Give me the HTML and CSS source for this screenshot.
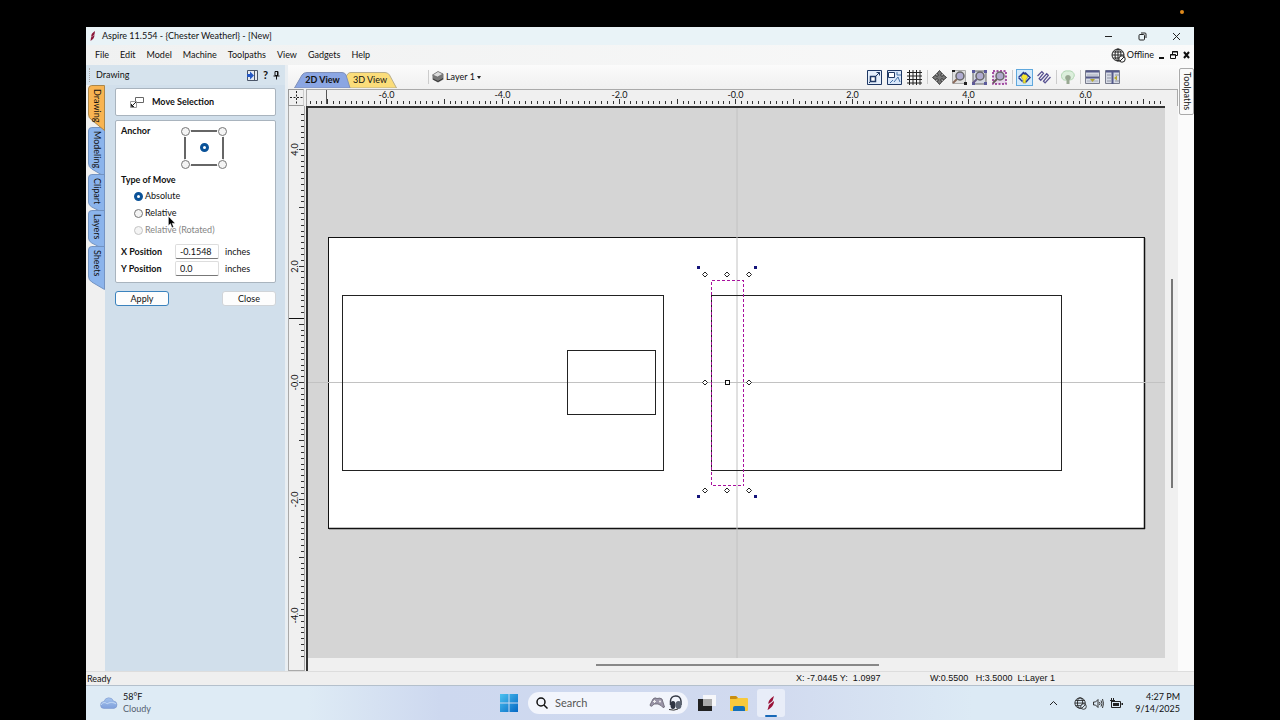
FILE: index.html
```html
<!DOCTYPE html>
<html lang="en">
<head>
<meta charset="utf-8">
<title>Aspire 11.554 - {Chester Weatherl} - [New]</title>
<link rel="stylesheet" href="styles.css">
</head>
<body>
<i class="rec-dot"></i>
<div class="desktop">
  <header class="titlebar">
    <svg class="feather" width="8" height="12" viewBox="0 0 8 12"><path d="M6 1C3 3 2 4.500 2.300 7L5.500 4.500zM5.500 5L2 7.500 1.500 11C4 9.500 5.500 7.500 5.500 5z" fill="#8a1538"/></svg>
    <h1 class="title">Aspire 11.554 - {Chester Weatherl} - [New]</h1>
    <div class="win-buttons">
      <button aria-label="Minimize"><svg width="9" height="9" viewBox="0 0 9 9"><path d="M1 4.500h7"/></svg></button>
      <button aria-label="Restore"><svg width="9" height="9" viewBox="0 0 9 9"><rect x="1" y="2.500" width="5.500" height="5.500" rx="1"/><path d="M3 1h4q1 0 1 1v4"/></svg></button>
      <button aria-label="Close"><svg width="9" height="9" viewBox="0 0 9 9"><path d="M1 1l7 7M8 1L1 8"/></svg></button>
    </div>
  </header>

  <nav class="menubar">
    <button>File</button><button>Edit</button><button>Model</button><button>Machine</button><button>Toolpaths</button><button>View</button><button>Gadgets</button><button>Help</button>
    <div class="status-right">
      <svg width="15" height="15" viewBox="0 0 15 15" fill="none" stroke="#222"><circle cx="7" cy="7" r="6"/><ellipse cx="7" cy="7" rx="3" ry="6"/><path d="M1 7h12M2 4h10M2 10h7M7 1v12"/><circle cx="11" cy="11" r="3.200" fill="#fafafa"/><path d="M9 13l4-4"/></svg>
      <span>Offline</span>
      <button aria-label="Minimize document"><svg width="6" height="8" viewBox="0 0 6 8"><path d="M0 7h5" stroke="#111" stroke-width="2"/></svg></button>
      <button aria-label="Restore document"><svg width="8" height="8" viewBox="0 0 8 8" fill="none" stroke="#111"><path d="M2.500 3V.5h5v4H6M2 1h6"/><path d="M.5 3.500h5v4h-5zM0 4h6"/></svg></button>
      <button aria-label="Close document"><svg width="7" height="8" viewBox="0 0 7 8"><path d="M1 1l5 6M6 1L1 7" stroke="#111" stroke-width="2"/></svg></button>
    </div>
  </nav>

  <main class="workspace">
    <aside class="side">
      <div class="side-head">
        <i class="grip"></i>
        <h2>Drawing</h2>
        <button aria-label="Switch layout"><svg width="11" height="11" viewBox="0 0 11 11"><path d="M.5.5h10v10H.5z" fill="#e4eaf2" stroke="#4a5568"/><path d="M7.500.5v10" stroke="#4a5568"/><path d="M0 4h3V1.500L7 5.500 3 9.500V7H0z" fill="#2458c4"/></svg></button>
        <button class="help" aria-label="Help">?</button>
        <button aria-label="Pin"><svg width="7" height="9" viewBox="0 0 7 9" stroke="#111" fill="none"><path d="M2 .5h3v4H2zM4.500.5v4M.5 5h6M3.500 5v3.500"/></svg></button>
      </div>
      <div class="side-body">
        <div class="side-tabs" role="tablist">
          <button role="tab" aria-selected="true" class="side-tab is-active t-drawing"><svg viewBox="0 0 18 46" preserveAspectRatio="none"><path d="M17.500.5H4Q.5.5.5 4V29Q.5 33 4 35L17.500 45.500z"/></svg><span>Drawing</span></button>
          <button role="tab" class="side-tab t-modeling"><svg viewBox="0 0 18 50" preserveAspectRatio="none"><path d="M17.500.5H4Q.5.5.5 4V36Q.5 40 4 42L17.500 49.500z"/></svg><span>Modeling</span></button>
          <button role="tab" class="side-tab t-clipart"><svg viewBox="0 0 18 40" preserveAspectRatio="none"><path d="M17.500.5H4Q.5.5.5 4V28Q.5 31 4 33L17.500 39.500z"/></svg><span>Clipart</span></button>
          <button role="tab" class="side-tab t-layers"><svg viewBox="0 0 18 40" preserveAspectRatio="none"><path d="M17.500.5H4Q.5.5.5 4V28Q.5 31 4 33L17.500 39.500z"/></svg><span>Layers</span></button>
          <button role="tab" class="side-tab t-sheets"><svg viewBox="0 0 18 44" preserveAspectRatio="none"><path d="M17.500.5H4Q.5.5.5 4V30Q.5 34 4 36L17.500 43.500z"/></svg><span>Sheets</span></button>
        </div>
        <form class="panel">
          <div class="card card-title">
            <svg width="14" height="11" viewBox="0 0 14 11" fill="none" stroke="#666"><path d="M5.500.5h8v5h-8z"/><path d="M.5 4.500h6v6h-6z" fill="#fff" stroke="#999"/><path d="M2 9l4-4M1.500 7v2.500H4" stroke="#222"/></svg>
            <h3>Move Selection</h3>
          </div>
          <div class="card card-form">
            <div class="anchor-row">
              <h4>Anchor</h4>
              <div class="anchor">
                <input type="radio" name="anchor" aria-label="Top left" class="a-tl">
                <input type="radio" name="anchor" aria-label="Top right" class="a-tr">
                <input type="radio" name="anchor" aria-label="Center" class="a-c" checked>
                <input type="radio" name="anchor" aria-label="Bottom left" class="a-bl">
                <input type="radio" name="anchor" aria-label="Bottom right" class="a-br">
              </div>
            </div>
            <h4>Type of Move</h4>
            <div class="moves">
              <label><input type="radio" name="move" checked>Absolute</label>
              <label><input type="radio" name="move">Relative</label>
              <label class="is-off"><input type="radio" name="move" disabled>Relative (Rotated)</label>
              <svg class="cursor" width="8" height="12" viewBox="0 0 8 12"><path d="M.5.5v9l2-2 1.500 4 1.500-.6-1.500-3.700H7z" fill="#000" stroke="#fff" stroke-width=".3"/></svg>
            </div>
            <div class="field"><label for="xpos">X Position</label><input id="xpos" type="text" value="-0.1548"><span>inches</span></div>
            <div class="field"><label for="ypos">Y Position</label><input id="ypos" type="text" value="0.0"><span>inches</span></div>
          </div>
          <div class="actions">
            <button type="button" class="btn is-default">Apply</button>
            <button type="button" class="btn">Close</button>
          </div>
        </form>
      </div>
    </aside>

    <section class="center">
      <div class="viewbar">
        <div class="view-tabs" role="tablist">
          <button role="tab" aria-selected="true" class="view-tab v2"><svg viewBox="0 0 57 16" preserveAspectRatio="none"><path d="M.5 16L8 3Q9.500.5 13 .5H48Q51 .5 52 3L56 16z"/></svg><span>2D View</span></button>
          <button role="tab" class="view-tab v3"><svg viewBox="0 0 51 16" preserveAspectRatio="none"><path d="M1 16L0 6Q1 .5 5 .5H39Q42 .5 43.500 3L50.500 16z"/></svg><span>3D View</span></button>
        </div>
        <button class="layer-btn">
          <svg width="12" height="12" viewBox="0 0 12 12"><path d="M6 .5L11.500 3v5.500L6 11.500.5 8.500V4z" fill="#777"/><path d="M6 .5L11 3 5.500 6 .5 4z" fill="#ddd" stroke="#666" stroke-width=".7"/><path d="M1 8l5 2.500L11 7.500" stroke="#333" fill="none"/></svg>
          <span>Layer 1</span><i class="caret"></i>
        </button>
        <div class="tools">
          <button aria-label="Zoom to job"><svg width="15" height="15" viewBox="0 0 15 15" fill="none" stroke="#1f3864"><path d="M.5.5h14v14H.5z" fill="#e4eefb"/><path d="M3.500 6.500h5v5h-5z" fill="#fff" stroke-width="1.500"/><path d="M8 7l4.500-4.500M9.500 2.500h3v3M2 13l2-2"/></svg></button>
          <button aria-label="Zoom to drawing"><svg width="15" height="15" viewBox="0 0 15 15" fill="none" stroke="#1f3864"><path d="M.5.5h14v14H.5z" fill="#d9e7fa"/><path d="M1.500 2.500h6v5h-6z" fill="#fff"/><path d="M7 12l4-5 2 5M3 13l3-3M10 2v3h4" stroke="#4472a8"/></svg></button>
          <button aria-label="Grid"><svg width="15" height="15" viewBox="0 0 15 15" fill="none" stroke="#222"><path d="M2.500 0v15M6 0v15M9.500 0v15M13 0v15M0 2.500h15M0 6h15M0 9.500h15M0 13h15"/></svg></button>
          <i class="sep"></i>
          <button aria-label="Pan"><svg width="15" height="15" viewBox="0 0 15 15"><path d="M7.500.5l3 3.500H9v2h2V4.500l3.500 3L11 10.500V9H9v2h1.500l-3 3.500-3-3.500H6V9H4v1.500L.5 7.500 4 4.500V6h2V4H4.500z" fill="#777" stroke="#222" stroke-width=".8"/></svg></button>
          <button aria-label="Zoom"><svg width="15" height="15" viewBox="0 0 15 15"><path d="M.5.5h13v13H.5z" fill="#e0e0e0" stroke="#aaa"/><path d="M0 0h3v2H0zM12 12h3v3h-3z" fill="#222"/><path d="M5 9l-4 4" stroke="#8a6a5a" stroke-width="2"/><circle cx="8" cy="6" r="4" fill="#b0acd0" stroke="#666" stroke-width="1.500"/></svg></button>
          <button aria-label="Zoom extents"><svg width="15" height="15" viewBox="0 0 15 15"><path d="M1 1h13v13H1z" fill="#d4d8e2" stroke="#666"/><path d="M0 0h3v3H0zM12 0h3v3h-3zM12 12h3v3h-3zM0 12h3v3H0z" fill="#5a5a9c"/><path d="M5 9l-4 4" stroke="#665a8a" stroke-width="2"/><circle cx="8" cy="6" r="4" fill="#b0acd0" stroke="#666" stroke-width="1.500"/></svg></button>
          <button aria-label="Zoom selected"><svg width="15" height="15" viewBox="0 0 15 15"><path d="M1 1h13v13H1z" fill="#e6d8ea" stroke="#8a1f8a" stroke-width="1.500" stroke-dasharray="2 1.500"/><path d="M5 9l-4 4" stroke="#665a5a" stroke-width="2"/><circle cx="8" cy="6" r="4" fill="#b0a8cc" stroke="#666" stroke-width="1.500"/></svg></button>
          <i class="sep"></i>
          <button class="is-on" aria-label="Toolpath preview"><svg width="13" height="13" viewBox="0 0 13 13" fill="none"><path d="M5 12V8.500C2.500 7 3 3 6.500 3S10.500 7 8 8.500V12z" fill="#f5e52f" stroke="#8a8a40" stroke-width=".6"/><path d="M.5 6.500l5-5 2 2M2 8l2.500 2.500M.5 6.500L3 9M7 1.500l5 5-4 4.500M5.500 1.500L2.500 5" stroke="#273a8c" stroke-width="1.500"/></svg></button>
          <button aria-label="Solid preview"><svg width="14" height="14" viewBox="0 0 13 13" fill="none" stroke="#575191" stroke-width="1.200"><path d="M.5 5.500l4-4 1.500 1.500L2 8l1.500 1.500L9 3.500 10.500 5 6 10.500 7.500 12l5-5.500"/></svg></button>
          <i class="sep"></i>
          <button aria-label="Bitmap visibility"><svg width="14" height="15" viewBox="0 0 14 15"><path d="M1 8C-1 4 3 0 7 1c4-1 8 3 5.500 6.500C12 10 9 10 7 10S2 11 1 8z" fill="#dcefdc" stroke="#b0d6b3"/><path d="M5.500 14v-4C3 8 4.500 5 7 5s4 3 1.500 5v4z" fill="#98a892"/></svg></button>
          <i class="sep"></i>
          <button aria-label="Tile horizontally"><svg width="15" height="14" viewBox="0 0 15 14"><path d="M.5.5h14v13H.5z" fill="#d7dbe5" stroke="#777b8c"/><path d="M1 1.500h13M1 7.500h13" stroke="#555a8a" stroke-width="2"/><path d="M2 5h11M2 11h11" stroke="#a8aebb"/><path d="M5 9h5l-2.500 3z" fill="#b5a830"/></svg></button>
          <button aria-label="Tile vertically"><svg width="15" height="14" viewBox="0 0 15 14"><path d="M.5.5h14v13H.5z" fill="#d7dbe5" stroke="#777b8c"/><path d="M7.500 1v13M1 1.500h13" stroke="#555a8a" stroke-width="2"/><path d="M2 5h4M2 8h4M2 11h4M10 5h4M10 11h4" stroke="#8f95a5"/><path d="M9 8l3-2.500v5z" fill="#b5a830"/></svg></button>
        </div>
      </div>
      <div class="drawing-area">
        <div class="origin"><svg width="15" height="15" viewBox="0 0 15 15" stroke="#222" fill="none"><path d="M7.500 1v13M1 7.500h13" stroke-dasharray="2 1.500"/></svg></div>
        <div class="ruler-h"><svg id="rulerH" viewBox="308 90 857 15" preserveAspectRatio="xMinYMin meet"></svg></div>
        <div class="ruler-v"><svg id="rulerV" viewBox="289 108 15 550" preserveAspectRatio="xMinYMin meet"></svg></div>
        <div class="canvas">
          <svg viewBox="308 108 857 550" preserveAspectRatio="xMinYMin meet">
            <rect x="328.500" y="237.500" width="816" height="291" fill="#fff" stroke="#111"/>
            <path d="M329 528.500h816M1144.500 238v291" stroke="#111" stroke-width="1.500"/>
            <path d="M308 382.500h857M737 108v550" stroke="#c2c2c2"/>
            <g fill="none" stroke="#222">
              <rect x="342.500" y="295.500" width="321" height="175"/>
              <rect x="567.500" y="350.500" width="88" height="64"/>
              <rect x="711.500" y="295.500" width="350" height="175"/>
            </g>
            <path d="M711.500 280.500h32v205h-32z" fill="none" stroke="#a8109e" stroke-dasharray="3 2" shape-rendering="crispEdges"/>
            <g id="handles" fill="#fff" stroke="#222"></g>
            <rect x="725.500" y="380.500" width="4" height="4" fill="#fff" stroke="#111"/>
            <path d="M697 266h3v3h-3zM754 266h3v3h-3zM697 495h3v3h-3zM754 495h3v3h-3z" fill="#14147a"/>
          </svg>
        </div>
        <div class="scroll-v"><i></i></div>
        <div class="scroll-h"><i></i></div>
      </div>
    </section>

    <aside class="right-strip"><button class="toolpaths-tab">Toolpaths</button></aside>
  </main>

  <footer class="statusbar">
    <span class="ready">Ready</span>
    <span class="coords">X: -7.0445 Y:&nbsp; 1.0997</span>
    <span class="dims">W:0.5500 &nbsp; H:3.5000 &nbsp;L:Layer 1</span>
  </footer>

  <div class="taskbar">
    <button class="weather">
      <svg width="18" height="12" viewBox="0 0 18 12"><defs><linearGradient id="cl" x2="0" y2="1"><stop stop-color="#a5c4ee"/><stop offset="1" stop-color="#7fa0dc"/></linearGradient></defs><path d="M4 11.500a3.500 3.500 0 0 1 0-7A5 5 0 0 1 13.500 4a3.800 3.800 0 0 1 .5 7.500z" fill="url(#cl)" stroke="#7893c8" stroke-width=".5"/><path d="M1 8c1-3 5-3 6-1 2-2 7-2 9 0" stroke="#c5daf6" fill="none"/></svg>
      <span class="w-text"><span>58°F</span><span class="dim">Cloudy</span></span>
    </button>
    <div class="apps">
      <button aria-label="Start"><svg width="18" height="18" viewBox="0 0 18 18"><defs><linearGradient id="wn" x2="1" y2="1"><stop stop-color="#4cc2f0"/><stop offset="1" stop-color="#0468c4"/></linearGradient></defs><path d="M0 0h8.500v8.500H0zM9.500 0H18v8.500H9.500zM0 9.500h8.500V18H0zM9.500 9.500H18V18H9.500z" fill="url(#wn)"/></svg></button>
      <label class="search">
        <svg width="12" height="12" viewBox="0 0 12 12" fill="none" stroke="#111" stroke-width="1.500"><circle cx="5" cy="5" r="4"/><path d="M8 8l3.500 3.500"/></svg>
        <input type="text" placeholder="Search" aria-label="Search">
        <svg width="34" height="16" viewBox="0 0 34 16"><path d="M1 10L4 4q2-2 4-.5 3-1 5 .5l2.500 8q-1 2-3.500-1.500L9 9 5 9q-3 4-4 1z" fill="#9a95a8" stroke="#62606d" stroke-width=".8"/><path d="M4 6.500h3M5.500 5v3" stroke="#eee"/><circle cx="11" cy="6.500" r="1" fill="#eee"/><path d="M21.500 10V6c0-6.500 10-7 10.500 0v4" fill="none" stroke="#333844" stroke-width="1.500"/><ellipse cx="24" cy="10" rx="2.500" ry="4" fill="#2f3542"/><ellipse cx="29.500" cy="10" rx="3" ry="4" fill="#5c6472"/><path d="M20 14.500q5 1.500 9-.5" stroke="#333" fill="none"/></svg>
      </label>
      <button aria-label="Task view"><svg width="18" height="18" viewBox="0 0 18 18"><path d="M5 1h13v11H5z" fill="#f6f7fa"/><path d="M0 5h14v12H0z" fill="#222"/><path d="M5 5h9v7H5z" fill="#aaa"/></svg></button>
      <button aria-label="File Explorer" class="explorer"><svg width="18" height="17" viewBox="0 0 18 17"><path d="M0 2q0-1 1-1h5l2 2h9q1 0 1 1v11q0 1-1 1H1q-1 0-1-1z" fill="#f7c93c"/><path d="M0 2q0-1 1-1h5l2 2-2 1H0z" fill="#c98d10"/><path d="M3 16v-3q0-2 2-2h8q2 0 2 2v3z" fill="#1470b8"/></svg></button>
      <button aria-label="Aspire" class="current"><svg width="10" height="16" viewBox="0 0 10 16"><path d="M8 1C4 4 2 6 2.500 9L6.500 6zM8 6L3 10l-1.500 5C5.500 13 8 10 8 6z" fill="#9a1238"/></svg></button>
    </div>
    <div class="tray">
      <button aria-label="Hidden icons"><svg width="9" height="6" viewBox="0 0 9 6"><path d="M1 5l3.500-3.500L8 5" stroke="#222" fill="none"/></svg></button>
      <svg width="13" height="13" viewBox="0 0 15 15" fill="none" stroke="#222"><circle cx="7" cy="7" r="6"/><ellipse cx="7" cy="7" rx="3" ry="6"/><path d="M1 7h12M2 4h10M2 10h7"/><circle cx="11" cy="11" r="3.200" fill="#dceaf5"/><path d="M9 13l4-4"/></svg>
      <svg width="11" height="11" viewBox="0 0 11 11" fill="none" stroke="#333"><path d="M.5 4h2L5 1.500v8L2.500 7h-2zM6.500 4q1 1.500 0 3M8 2.500q2 3 0 6M9.500 1q2 4.500 0 9"/></svg>
      <svg width="13" height="10" viewBox="0 0 13 10"><path d="M1.500 3.500h9v6h-9z" fill="#dceaf5" stroke="#222"/><path d="M3 5h6v3H3z" fill="#222"/><path d="M11.500 5H13v2h-1.500z" fill="#222"/><path d="M1.500 0v4M3.500 0v4M0 2.500h5" stroke="#222"/></svg>
      <div class="clock"><span>4:27 PM</span><span>9/14/2025</span></div>
    </div>
  </div>
</div>
<script src="app.js"></script>
</body>
</html>
```
FILE: styles.css
```css
* { box-sizing: border-box; }
body {
  margin: 0;
  background: #000;
  font: 9px/12px Lato, "Open Sans", sans-serif;
  color: #111;
}
h1, h2, h3, h4 { margin: 0; font-size: inherit; font-weight: 400; }
button { font: inherit; color: inherit; background: none; border: 0; padding: 0; }
svg { display: block; flex: none; }
input { font: inherit; color: inherit; }

.rec-dot {
  position: absolute;
  top: 10px;
  right: 96px;
  width: 4px;
  height: 4px;
  border-radius: 50%;
  background: #e08a1c;
}
.desktop {
  display: flex;
  flex-direction: column;
  min-height: 100vh;
  padding: 27px 86px 0;
}

.titlebar {
  display: flex;
  align-items: center;
  height: 18px;
  padding: 0 13px 0 3px;
  background: #e9f3f7;
}
.title { margin-left: 5px; }
.win-buttons { display: flex; gap: 25px; margin-left: auto; }
.win-buttons svg { fill: none; stroke: #222; }

.menubar {
  display: flex;
  align-items: center;
  gap: 11px;
  height: 20px;
  padding: 0 4px 0 9px;
  background: linear-gradient(90deg, #f0f1f1, #fafafa);
}
.status-right { display: flex; align-items: center; gap: 5px; margin-left: auto; }
.status-right span { margin-left: -4px; }

.workspace { display: flex; flex: 1; background: #f0f0f0; }

.side { display: flex; flex-direction: column; width: 202px; background: #d1dfeb; border-right: 3px solid #e9eef2; }
.side-head { display: flex; align-items: center; height: 20px; padding: 0 5px 0 3px; gap: 5px; background: #d6e3ed; }
.side-head h2 { flex: 1; }
.grip { width: 2px; height: 14px; border-left: 1px dotted #aaa; }
.help { font-weight: 700; font-size: 11px; }
.side-body { display: flex; flex: 1; }
.side-tabs { display: flex; flex-direction: column; width: 19px; padding-left: 2px; background: #f0f0f0; }
.side-tab { position: relative; width: 17px; }
.side-tab svg { position: absolute; inset: 0; width: 100%; height: 100%; fill: #8bb4ec; stroke: #7292c0; }
.side-tab.is-active svg { fill: #f8b452; stroke: #a88448; }
.side-tab span { position: absolute; top: 4px; left: 3px; writing-mode: vertical-rl; }
.is-active { z-index: 1; }
.t-drawing { height: 46px; }
.t-modeling { height: 50px; margin-top: -4px; }
.t-clipart { height: 40px; margin-top: -3px; }
.t-layers { height: 40px; margin-top: -4px; }
.t-sheets { height: 44px; margin-top: -4px; }

.panel { flex: 1; padding: 3px 9px 0 10px; }
.card { background: #fff; border: 1px solid #a9b4be; border-radius: 2px; }
.card-title { display: flex; align-items: center; gap: 8px; height: 28px; padding-left: 14px; }
h3, h4, .field label { font-weight: 700; }
.card-form { margin-top: 4px; padding: 4px 5px 5px; }
.anchor-row { display: flex; height: 49px; }
.anchor-row h4 { width: 63px; }
.anchor { position: relative; width: 40px; height: 36px; margin-top: 5px; border: 2px solid #666; }
input[type="radio"] {
  appearance: none;
  width: 9px;
  height: 9px;
  margin: 0;
  border: 1px solid #777;
  border-radius: 50%;
  background: #f4f4f4;
}
input[type="radio"]:checked { border: 3px solid #0a5298; background: #fff; }
input[type="radio"]:disabled { border-color: #c4c4c4; }
.anchor input { position: absolute; }
.anchor input:not(:checked) { box-shadow: 0 0 0 1px #fff; }
.a-tl { top: -5px; left: -5px; }
.a-tr { top: -5px; right: -5px; }
.a-bl { bottom: -5px; left: -5px; }
.a-br { bottom: -5px; right: -5px; }
.a-c { top: 11px; left: 14px; }
.moves { position: relative; display: flex; flex-direction: column; gap: 5px; padding: 4px 0 0 13px; }
.moves label { display: flex; align-items: center; gap: 2px; height: 12px; }
.is-off { color: #858585; }
.cursor { position: absolute; top: 30px; left: 47px; }
.field { display: flex; align-items: center; height: 17px; }
.moves + .field { margin-top: 7px; }
.field label { width: 54px; }
.field input { width: 44px; height: 15px; padding: 0 4px; border: 1px solid #ddd; border-bottom-color: #777; border-radius: 2px; background: #fff; }
.field span { margin-left: 6px; }
.actions { display: flex; justify-content: space-between; margin-top: 8px; }
.btn { width: 54px; height: 15px; border: 1px solid #d0d4d8; border-radius: 3px; background: #fdfdfd; line-height: 12px; }
.btn.is-default { border-color: #3a82bd; }

.center { display: flex; flex: 1; flex-direction: column; min-width: 0; }
.viewbar { display: flex; align-items: center; height: 24px; padding: 0 58px 0 6px; background: linear-gradient(#fbfbfb, #f0f0f0); }
.view-tabs { display: flex; align-self: flex-end; margin-bottom: 1px; }
.view-tab { position: relative; height: 16px; }
.view-tab svg { position: absolute; inset: 0; width: 100%; height: 100%; }
.view-tab span { position: relative; }
.v2 { width: 57px; z-index: 1; font-weight: 700; }
.v2 svg { fill: #8ba6e3; stroke: #8090b8; }
.v3 { width: 51px; margin-left: -5px; padding-right: 3px; }
.v3 svg { fill: #fbdd7a; stroke: #b8ae8c; }
.layer-btn { display: flex; align-items: center; gap: 2px; margin-left: 31px; padding-left: 3px; height: 14px; border-left: 1px solid #ccc; }
.caret { border: 2px solid transparent; border-top: 3px solid #222; border-bottom: 0; }
.tools { display: flex; align-items: center; gap: 5px; margin-left: auto; }
.sep { width: 1px; height: 14px; margin: 0 -1px 0 0; background: #ccc; }
.tools .is-on { padding: 1px; background: #d3eafb; outline: 1px solid #5fa8dd; }

.drawing-area {
  display: grid;
  flex: 1;
  grid-template-columns: 18px minmax(0, 1fr) 13px;
  grid-template-rows: 17px 1fr 13px;
}
.origin { border: 1px solid #999; border-right-color: #ccc; width: 16px; }
.ruler-h { grid-column: 2 / 4; padding-left: 1px; border: 1px solid #aaa; border-bottom: 0; }
.ruler-v { grid-row: 2 / 4; width: 17px; padding-top: 2px; border: 1px solid #aaa; border-top: 0; }
.ruler-h svg { width: calc(100% - 12px); overflow: visible; }
.ruler-v svg { width: 100%; overflow: visible; }
.canvas { border: 2px solid #333; border-width: 2px 0 0 2px; background: #d5d5d5; overflow: hidden; }
.canvas svg { width: 100%; }
.scroll-v { display: flex; justify-content: center; padding-top: 173px; background: #f0f0f0; }
.scroll-v i { width: 2px; height: 209px; background: #777; }
.scroll-h { grid-column: 2 / 4; border-left: 2px solid #333; padding: 6px 0 0 33%; background: #f0f0f0; }
.scroll-h i { display: block; width: 283px; height: 2px; background: #888; }
.ruler-text { font-size: 9px; fill: #111; }

.right-strip { width: 16px; padding-top: 3px; background: #fbfbfb; }
.toolpaths-tab { width: 15px; height: 47px; margin-left: 1px; border: 1px solid #aaa; border-radius: 2px; background: #fafafa; writing-mode: vertical-rl; }

.statusbar { display: grid; grid-template-columns: 709px 134px 1fr; height: 14px; padding-left: 1px; background: #efefef; border-top: 1px solid #ddd; line-height: 13px; }
.dims, .coords { font-family: "Liberation Sans", Arial, sans-serif; }

.taskbar {
  display: grid;
  grid-template-columns: 1fr auto 1fr;
  align-items: center;
  height: 35px;
  padding: 0 14px;
  background: linear-gradient(90deg, #deebf5 0 20%, #cdd8ef 32%, #d1daef 62%, #dceaf5 80%);
  border-top: 1px solid #b4c0cc;
}
.weather { display: flex; align-items: center; gap: 5px; text-align: left; }
.w-text, .clock { display: flex; flex-direction: column; }
.dim { color: #555f70; }
.apps { display: flex; align-items: center; gap: 10px; padding-left: 5px; }
.search { display: flex; align-items: center; gap: 7px; width: 160px; height: 22px; padding: 0 5px 0 8px; border-radius: 11px; background: #f2f5fc; }
.search input { flex: 1; width: 0; min-width: 0; padding: 0; border: 0; background: none; font-size: 11px; }
.search input::placeholder { color: #555; opacity: 1; }
.explorer { margin-left: 4px; }
.current { display: grid; place-items: center; position: relative; width: 28px; height: 28px; margin-left: -1px; border-radius: 3px; background: #e8edf8; }
.current::after { content: ""; position: absolute; bottom: 0; left: 8px; width: 12px; height: 2px; border-radius: 1px; background: #1668b8; }
.tray { display: flex; align-items: center; justify-content: flex-end; gap: 6px; }
.tray svg { margin-right: 0; }
.tray button { margin-right: 10px; }
.clock { margin-left: 6px; text-align: right; }
```
FILE: app.js
```js
const NS = "http://www.w3.org/2000/svg";
const UNIT = 58.25;
const ZERO_X = 735;
const ZERO_Y = 382;

function add(parent, name, attrs, text) {
  const el = document.createElementNS(NS, name);
  for (const key in attrs) el.setAttribute(key, attrs[key]);
  if (text) el.textContent = text;
  parent.appendChild(el);
}

function tickLength(tenth) {
  return tenth % 10 === 0 ? 5 : 3;
}

const h = document.getElementById("rulerH");
for (let t = -73; t <= 73; t++) {
  const x = Math.round(ZERO_X + t * UNIT / 10) + 0.5;
  add(h, "path", { d: `M${x} 104v${-tickLength(t)}`, stroke: "#333" });
  if (t % 20 === 0) {
    const label = (t <= 0 ? "-" : "") + (Math.abs(t) / 10).toFixed(1);
    add(h, "text", { x, y: 98, "text-anchor": "middle", class: "ruler-text" }, label);
  }
}
add(h, "path", { d: "M326.500 90v14", stroke: "#555" });

const v = document.getElementById("rulerV");
for (let t = -47; t <= 46; t++) {
  const y = Math.round(ZERO_Y - t * UNIT / 10) + 0.5;
  add(v, "path", { d: `M304 ${y}h${-tickLength(t)}`, stroke: "#333" });
  if (t % 20 === 0) {
    const label = (t <= 0 ? "-" : "") + (Math.abs(t) / 10).toFixed(1);
    add(v, "text", { transform: `translate(298 ${y}) rotate(-90)`, "text-anchor": "middle", class: "ruler-text" }, label);
  }
}
add(v, "path", { d: "M289 318.500h15", stroke: "#111" });

const handles = document.getElementById("handles");
for (const y of [274, 382, 490]) {
  for (const x of [705, 727, 749]) {
    if (x === 727 && y === 382) continue;
    add(handles, "path", { d: `M${x} ${y - 2}l2.500 2.500-2.500 2.500-2.500-2.500z` });
  }
}
```
